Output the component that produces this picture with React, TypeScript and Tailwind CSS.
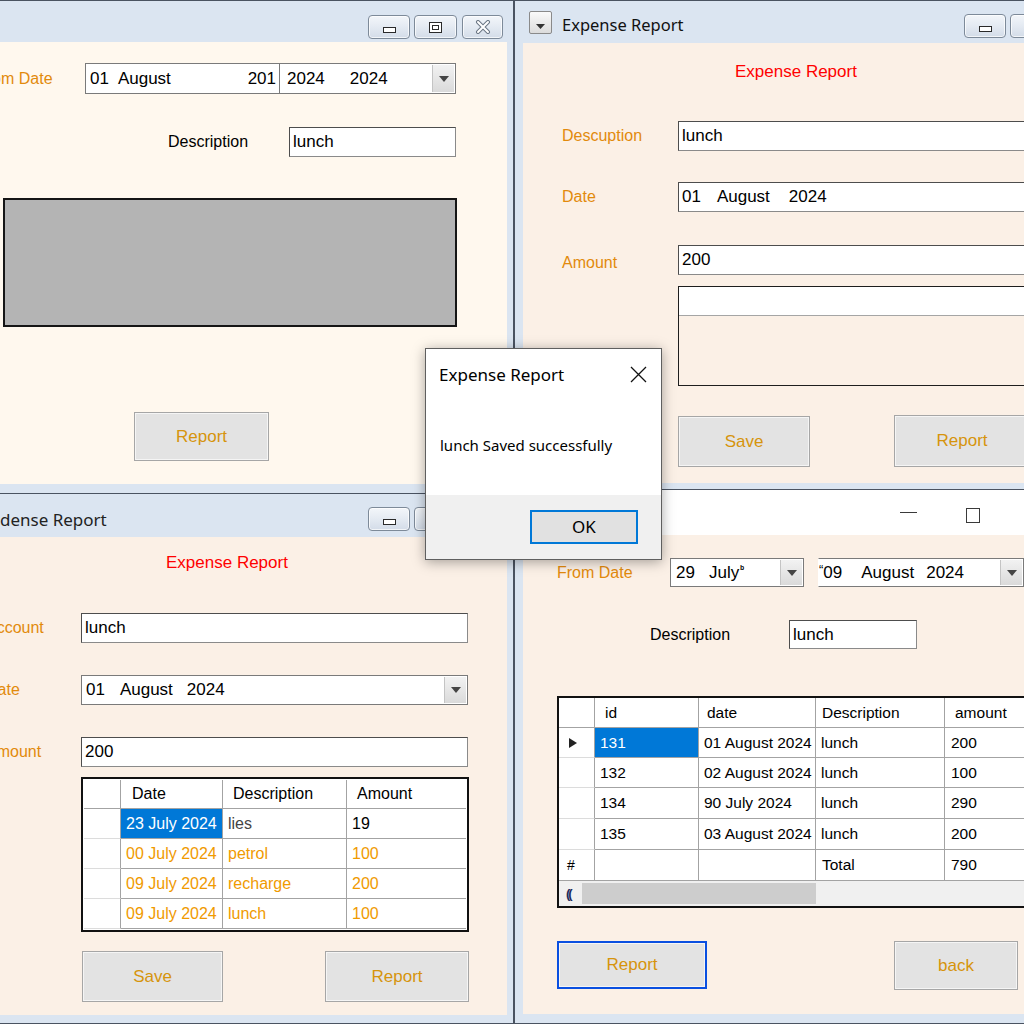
import React from 'react';

const ui = "font-['Liberation_Sans',Arial,sans-serif]";
const seg = "font-['Noto_Sans','Open_Sans',sans-serif]";

function TitleBtn({ children, className = '' }: { children: React.ReactNode; className?: string }) {
  return (
    <div
      className={`flex h-[24px] items-center justify-center rounded-[4px] border border-[#7d8a99] bg-gradient-to-b from-[#f3f6fa] via-[#e4eaf2] to-[#d3dce8] shadow-[inset_0_0_0_1px_rgba(255,255,255,0.7)] ${className}`}
    >
      {children}
    </div>
  );
}

function CaptionButtons() {
  return (
    <div className="flex gap-[4px]">
      <TitleBtn className="w-[42px]">
        <div className="mt-[5px] h-[6px] w-[13px] border border-[#2a2a2a] bg-white" />
      </TitleBtn>
      <TitleBtn className="w-[43px]">
        <div className="h-[11px] w-[13px] border border-[#2a2a2a] bg-white p-[2px]">
          <div className="h-full w-full border border-[#2a2a2a]" />
        </div>
      </TitleBtn>
      <TitleBtn className="ml-[1px] w-[41px]">
        <svg width="16" height="14" viewBox="0 0 16 14">
          <path d="M3 2L13 12M13 2L3 12" stroke="#6b7684" strokeWidth="4" strokeLinecap="round" />
          <path d="M3 2L13 12M13 2L3 12" stroke="#fff" strokeWidth="2" strokeLinecap="round" />
        </svg>
      </TitleBtn>
    </div>
  );
}

function DropBtn() {
  return (
    <div className="flex h-full w-[22px] items-center justify-center border-l border-[#c4c4c4] bg-gradient-to-b from-[#f2f2f2] to-[#dadada]">
      <svg width="10" height="6" viewBox="0 0 10 6">
        <path d="M0 0h10L5 6z" fill="#454545" />
      </svg>
    </div>
  );
}

function TextBox({ children, className = '' }: { children: React.ReactNode; className?: string }) {
  return (
    <div
      className={`flex items-center border border-[#8a8a8a] border-l-[#4d4d4d] border-t-[#4d4d4d] bg-white pl-[3px] text-[17px] text-black ${className}`}
    >
      {children}
    </div>
  );
}

function WinButton({ label, className = '', focused = false }: { label: string; className?: string; focused?: boolean }) {
  return (
    <div
      className={`flex items-center justify-center bg-[#e3e3e3] text-[17px] text-[#d6940c] ${
        focused
          ? 'border-2 border-[#0a4fe0] shadow-[inset_0_0_0_1px_#f5f5f5]'
          : 'border border-[#a6a6a6] shadow-[inset_0_0_0_1px_#f5f5f5]'
      } ${className}`}
    >
      {label}
    </div>
  );
}

const expenses = [
  { date: '23 July 2024', desc: 'lies', amount: '19', selected: true },
  { date: '00 July 2024', desc: 'petrol', amount: '100', selected: false },
  { date: '09 July 2024', desc: 'recharge', amount: '200', selected: false },
  { date: '09 July 2024', desc: 'lunch', amount: '100', selected: false },
];

const records = [
  { id: '131', date: '01 August 2024', desc: 'lunch', amount: '200' },
  { id: '132', date: '02 August 2024', desc: 'lunch', amount: '100' },
  { id: '134', date: '90 July 2024', desc: 'lunch', amount: '290' },
  { id: '135', date: '03 August 2024', desc: 'lunch', amount: '200' },
];

const cell = 'flex items-center border-b border-r border-[#a3a3a3] pl-[5px]';

export default function App() {
  return (
    <div className="relative h-[1024px] w-[1024px] overflow-hidden bg-[#dbe5f1]">
      {/* top-left: filter form */}
      <div className="absolute left-[-48px] top-0 flex h-[494px] w-[563px] flex-col border border-[#4a5361] bg-[#dbe5f1] px-[7px] pb-[9px]">
        <div className="flex h-[41px] shrink-0 items-start justify-end pr-[4px] pt-[14px]">
          <CaptionButtons />
        </div>
        <div className={`flex flex-1 flex-col bg-[#fff8ee] ${ui}`}>
          <div className="mt-[21px] flex h-[31px] items-center">
            <div className="ml-[17px] w-[108px] text-[16px] text-[#e28a0c]">From Date</div>
            <div className="flex h-[31px] w-[371px] border border-[#7a7a7a] bg-white text-[17px] text-black">
              <div className="flex w-[193px] items-center justify-between pl-[4px] pr-[3px]">
                <span>
                  01<span className="ml-[9px]">August</span>
                </span>
                <span>201</span>
              </div>
              <div className="flex flex-1 items-center border-l border-[#7a7a7a] pl-[7px]">
                <span>2024</span>
                <span className="ml-[25px]">2024</span>
                <div className="ml-auto h-full py-[1px] pr-[1px]">
                  <DropBtn />
                </div>
              </div>
            </div>
          </div>
          <div className="mt-[33px] flex h-[30px] items-center">
            <div className="ml-[208px] w-[121px] text-[16px] text-black">Description</div>
            <TextBox className="h-[30px] w-[167px]">lunch</TextBox>
          </div>
          <div className="ml-[43px] mt-[41px] h-[129px] w-[454px] border-2 border-[#151515] bg-[#b4b4b4]" />
          <WinButton label="Report" className="ml-[174px] mt-[85px] h-[49px] w-[135px]" />
        </div>
      </div>

      {/* top-right: entry form */}
      <div className="absolute left-[513px] top-0 flex h-[491px] w-[600px] flex-col border-y border-l-2 border-[#4a5361] bg-[#dbe5f1] px-[8px] pb-[7px]">
        <div className="flex h-[42px] shrink-0 items-center">
          <div className="ml-[6px] flex h-[23px] w-[23px] items-end justify-center rounded-[2px] border border-[#8a8a8a] bg-gradient-to-b from-[#fafafa] to-[#dcdcdc] pb-[4px]">
            <svg width="9" height="5" viewBox="0 0 9 5">
              <path d="M0 0h9L4.5 5z" fill="#333" />
            </svg>
          </div>
          <span className={`ml-[10px] mt-[6px] text-[16.5px] text-[#111] ${seg}`}>Expense Report</span>
          <div className="ml-auto mr-[6px] self-start pt-[13px]">
            <CaptionButtons />
          </div>
        </div>
        <div className={`flex flex-1 flex-col bg-[#fbf0e6] ${ui}`}>
          <div className="ml-[212px] mt-[19px] h-[20px] text-[17px] leading-[20px] text-[#ff0000]">Expense Report</div>
          <div className="mt-[39px] flex h-[30px] items-center">
            <div className="ml-[39px] w-[116px] text-[16px] text-[#e28a0c]">Descuption</div>
            <TextBox className="h-[30px] w-[420px]">lunch</TextBox>
          </div>
          <div className="mt-[31px] flex h-[30px] items-center">
            <div className="ml-[39px] w-[116px] text-[16px] text-[#e28a0c]">Date</div>
            <TextBox className="h-[30px] w-[420px]">
              01<span className="ml-[16px]">August</span>
              <span className="ml-[19px]">2024</span>
            </TextBox>
          </div>
          <div className="mt-[33px] flex h-[30px] items-center">
            <div className="ml-[39px] mt-[6px] w-[116px] text-[16px] text-[#e28a0c]">Amount</div>
            <TextBox className="h-[30px] w-[420px]">200</TextBox>
          </div>
          <div className="ml-[155px] mt-[11px] h-[100px] w-[420px] border border-[#1e1e1e] bg-[#fbf0e6]">
            <div className="h-[29px] border-b border-[#a5a5a5] bg-white" />
          </div>
          <div className="mt-[29px] flex items-start">
            <WinButton label="Save" className="ml-[155px] mt-[1px] h-[51px] w-[132px]" />
            <WinButton label="Report" className="ml-[84px] h-[52px] w-[136px]" />
          </div>
        </div>
      </div>

      {/* bottom-left: expense list form */}
      <div className="absolute left-[-48px] top-[493px] flex h-[531px] w-[563px] flex-col border border-[#4a5361] bg-[#dbe5f1] px-[7px] pb-[8px]">
        <div className="flex h-[43px] shrink-0 items-start">
          <span className={`ml-[40px] mt-[13px] text-[17px] text-[#222] ${seg}`}>dense Report</span>
          <div className="ml-auto mr-[4px] pt-[13px]">
            <CaptionButtons />
          </div>
        </div>
        <div className={`flex flex-1 flex-col bg-[#fbf0e6] ${ui}`}>
          <div className="ml-[206px] mt-[16px] h-[20px] text-[17px] leading-[20px] text-[#ff0000]">Expense Report</div>
          <div className="mt-[40px] flex h-[30px] items-center">
            <div className="ml-[26px] w-[95px] text-[16px] text-[#e28a0c]">Account</div>
            <TextBox className="h-[30px] w-[387px]">lunch</TextBox>
          </div>
          <div className="mt-[32px] flex h-[30px] items-center">
            <div className="ml-[26px] w-[95px] text-[16px] text-[#e28a0c]">Date</div>
            <div className="flex h-[30px] w-[387px] items-center border border-[#7a7a7a] bg-white pl-[4px] text-[17px] text-black">
              01<span className="ml-[15px]">August</span>
              <span className="ml-[14px]">2024</span>
              <div className="ml-auto h-full py-[1px] pr-[1px]">
                <DropBtn />
              </div>
            </div>
          </div>
          <div className="mt-[32px] flex h-[30px] items-center">
            <div className="ml-[26px] w-[95px] text-[16px] text-[#e28a0c]">Amount</div>
            <TextBox className="h-[30px] w-[387px]">200</TextBox>
          </div>
          <div className="ml-[121px] mt-[10px] w-[388px] border-2 border-[#111] bg-white p-[1px] text-[16px]">
            <div className="grid grid-cols-[37px_102px_124px_1fr]">
              <div className="h-[29px] border-b border-r border-[#a3a3a3]" />
              <div className={`${cell} pl-[11px] text-black`}>Date</div>
              <div className={`${cell} pl-[10px] text-black`}>Description</div>
              <div className={`${cell} border-r-0 pl-[10px] text-black`}>Amount</div>
              {expenses.map((r, i) => (
                <React.Fragment key={i}>
                  <div className="h-[30px] border-b border-r border-[#a3a3a3] border-b-[#dcdcdc]" />
                  <div
                    className={`${cell} ${
                      r.selected ? 'bg-[#0078d7] text-white' : 'text-[#f09a00]'
                    }`}
                  >
                    {r.date}
                  </div>
                  <div className={`${cell} pl-[3px] ${r.selected ? 'text-[#444]' : 'text-[#f09a00]'}`}>{r.desc}</div>
                  <div className={`${cell} border-r-0 ${r.selected ? 'text-black' : 'text-[#f09a00]'}`}>{r.amount}</div>
                </React.Fragment>
              ))}
            </div>
          </div>
          <div className="mt-[19px] flex">
            <WinButton label="Save" className="ml-[122px] h-[51px] w-[141px]" />
            <WinButton label="Report" className="ml-[102px] h-[51px] w-[144px]" />
          </div>
        </div>
      </div>

      {/* bottom-right: report form */}
      <div className="absolute left-[513px] top-[489px] flex h-[535px] w-[600px] flex-col border-y border-l-2 border-[#4a5361] bg-[#dbe5f1] px-[8px] pb-[9px]">
        <div className="flex h-[45px] shrink-0 items-center bg-white">
          <div className="ml-[377px] h-[1px] w-[17px] bg-[#3a3a3a]" />
          <div className="ml-[49px] mt-[5px] h-[15px] w-[14px] border border-[#3a3a3a]" />
        </div>
        <div className={`flex flex-1 flex-col bg-[#fbf0e6] ${ui}`}>
          <div className="mt-[23px] flex h-[29px] items-center">
            <div className="ml-[34px] w-[113px] text-[16px] text-[#e28a0c]">From Date</div>
            <div className="flex h-[29px] w-[134px] items-center border border-[#7a7a7a] bg-white pl-[5px] text-[17px] text-black">
              29<span className="ml-[14px]">July</span>
              <span className="-mt-[8px] ml-[1px] text-[10px] font-bold">ᵇ</span>
              <div className="ml-auto h-full py-[1px] pr-[1px]">
                <DropBtn />
              </div>
            </div>
            <div className="ml-[14px] flex h-[29px] w-[206px] items-center border border-[#7a7a7a] border-l-white bg-white text-[17px] text-black">
              <span className="-mt-[6px] text-[13px]">“</span>09<span className="ml-[19px]">August</span>
              <span className="ml-[12px]">2024</span>
              <div className="ml-auto h-full py-[1px] pr-[1px]">
                <DropBtn />
              </div>
            </div>
          </div>
          <div className="mt-[33px] flex h-[29px] items-center">
            <div className="ml-[127px] w-[139px] text-[16px] text-black">Description</div>
            <TextBox className="h-[29px] w-[128px]">lunch</TextBox>
          </div>
          <div className="ml-[34px] mt-[47px] w-[520px] border-2 border-[#111] bg-white text-[15.5px] text-black">
            <div className="grid grid-cols-[36px_104px_117px_129px_1fr]">
              <div className="h-[30px] border-b border-r border-[#a3a3a3]" />
              <div className={`${cell} pl-[10px]`}>id</div>
              <div className={`${cell} pl-[8px]`}>date</div>
              <div className={`${cell} pl-[6px]`}>Description</div>
              <div className={`${cell} border-r-0 pl-[10px]`}>amount</div>
              {records.map((r, i) => (
                <React.Fragment key={r.id}>
                  <div
                    className={`flex items-center border-b border-r border-[#a3a3a3] border-b-[#dcdcdc] pl-[10px] ${
                      i < 2 ? 'h-[30px]' : 'h-[31px]'
                    }`}
                  >
                    {i === 0 && (
                      <svg width="8" height="10" viewBox="0 0 8 10">
                        <path d="M0 0L8 5L0 10z" fill="#222" />
                      </svg>
                    )}
                  </div>
                  <div className={`${cell} ${i === 0 ? 'bg-[#0078d7] text-white' : ''}`}>{r.id}</div>
                  <div className={cell}>{r.date}</div>
                  <div className={`${cell} pl-[4px]`}>{r.desc}</div>
                  <div className={`${cell} border-r-0 pl-[6px]`}>{r.amount}</div>
                </React.Fragment>
              ))}
              <div className="flex h-[31px] items-center border-b border-r border-[#a3a3a3] pl-[8px] text-[14px]">#</div>
              <div className={cell} />
              <div className={cell} />
              <div className={`${cell} pl-[6px]`}>Total</div>
              <div className={`${cell} border-r-0 pl-[6px]`}>790</div>
            </div>
            <div className="flex h-[25px] bg-[#f0f0f0]">
              <div className="flex w-[23px] items-center pl-[7px] text-[13px] font-bold tracking-[-2px] text-[#1d2a5c]">((</div>
              <div className="my-[2px] w-[234px] bg-[#cdcdcd]" />
            </div>
          </div>
          <div className="mt-[33px] flex items-start">
            <WinButton label="Report" focused className="ml-[34px] h-[48px] w-[150px]" />
            <WinButton label="back" className="ml-[187px] h-[49px] w-[124px]" />
          </div>
        </div>
      </div>

      {/* message box */}
      <div
        className={`absolute left-[425px] top-[348px] flex h-[212px] w-[237px] flex-col border border-[#5f5f5f] bg-white shadow-[0_2px_12px_rgba(0,0,0,0.35)] ${seg}`}
      >
        <div className="flex items-center justify-between pl-[13px] pr-[14px] pt-[13px]">
          <span className="text-[17px] text-black">Expense Report</span>
          <svg width="17" height="17" viewBox="0 0 17 17">
            <path d="M1 1L16 16M16 1L1 16" stroke="#111" strokeWidth="1.3" />
          </svg>
        </div>
        <div className="mt-[46px] pl-[14px] text-[15px] text-black">lunch Saved successfully</div>
        <div className="mt-auto flex h-[64px] items-center justify-end bg-[#f0f0f0] pr-[23px]">
          <div className="flex h-[34px] w-[108px] items-center justify-center border-2 border-[#0078d7] bg-[#e1e1e1] text-[17px] text-black">
            OK
          </div>
        </div>
      </div>
    </div>
  );
}
